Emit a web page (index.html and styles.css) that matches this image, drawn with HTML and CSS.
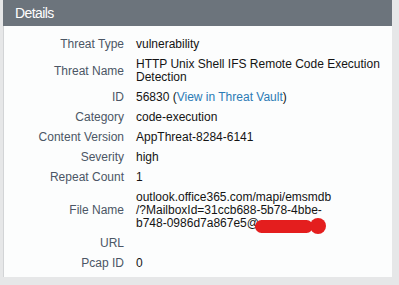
FILE: index.html
```html
<!DOCTYPE html>
<html lang="en">
<head>
    <meta charset="UTF-8">
    <title>Threat Details</title>
    <link rel="stylesheet" href="styles.css">
</head>
<body>
    <div class="panel">
        <div class="panel-header">Details</div>

        <div class="details">
            <div class="row">
                <span class="label">Threat Type</span>
                <span class="value">vulnerability</span>
            </div>
            <div class="row">
                <span class="label">Threat Name</span>
                <span class="value">HTTP Unix Shell IFS Remote Code Execution<br>Detection</span>
            </div>
            <div class="row">
                <span class="label">ID</span>
                <span class="value">56830 (<a href="#">View in Threat Vault</a>)</span>
            </div>
            <div class="row">
                <span class="label">Category</span>
                <span class="value">code-execution</span>
            </div>
            <div class="row">
                <span class="label">Content Version</span>
                <span class="value">AppThreat-8284-6141</span>
            </div>
            <div class="row">
                <span class="label">Severity</span>
                <span class="value">high</span>
            </div>
            <div class="row">
                <span class="label">Repeat Count</span>
                <span class="value">1</span>
            </div>
            <div class="row">
                <span class="label">File Name</span>
                <span class="value">outlook.office365.com/mapi/emsmdb<br>/?MailboxId=31ccb688-5b78-4bbe-<br>b748-0986d7a867e5@<span class="redact"></span></span>
            </div>
            <div class="row">
                <span class="label">URL</span>
                <span class="value"></span>
            </div>
            <div class="row">
                <span class="label">Pcap ID</span>
                <span class="value">0</span>
            </div>
        </div>
    </div>
</body>
</html>
```

FILE: styles.css
```css
* {
    margin: 0;
    padding: 0;
    box-sizing: border-box;
}

body {
    font-family: "Liberation Sans", Arial, sans-serif;
    background-color: #e6e7e8;
    width: 399px;
    height: 285px;
    overflow: hidden;
}

.panel {
    margin-left: 3px;
    width: 389px;
    height: 277px;
    background-color: #fcfdfd;
    border-left: 1px solid #d2d4d6;
}

.panel-header {
    height: 26px;
    line-height: 26px;
    background-color: #6c747c;
    color: #fff;
    font-size: 14px;
    letter-spacing: -0.6px;
    padding-left: 12px;
    margin-left: -1px;
}

.details {
    padding-top: 8px;
    font-size: 12px;
    line-height: 13px;
}

.row {
    display: grid;
    grid-template-columns: 120px 1fr;
    column-gap: 12px;
    align-items: center;
    padding: 4px 0 3px;
    min-height: 20px;
}

.label {
    text-align: right;
    color: #4b5665;
}

.value {
    color: #141414;
}

.value a {
    color: #2b7bb5;
    text-decoration: none;
}

.redact {
    display: inline-block;
    position: relative;
    width: 58px;
    height: 13px;
    margin-left: -4px;
    margin-bottom: -6px;
    vertical-align: 0;
    background-color: #e41e1e;
    border-radius: 7px;
}

.redact::after {
    content: "";
    position: absolute;
    right: -13px;
    top: -2px;
    width: 16px;
    height: 16px;
    border-radius: 50%;
    background-color: #e41e1e;
}
```
